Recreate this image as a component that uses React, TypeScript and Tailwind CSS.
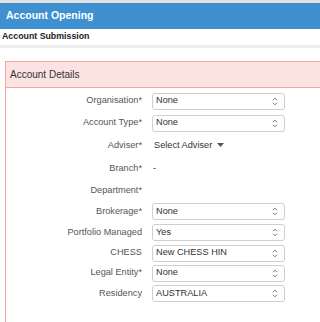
import { ReactNode } from 'react'

type Row = {
  label: string
  h: string
  kind: 'select' | 'adviser' | 'text' | 'empty'
  value?: string
}

const rows: Row[] = [
  { label: 'Organisation*', h: 'h-[22px]', kind: 'select', value: 'None' },
  { label: 'Account Type*', h: 'h-[22px]', kind: 'select', value: 'None' },
  { label: 'Adviser*', h: 'h-[23px]', kind: 'adviser', value: 'Select Adviser' },
  { label: 'Branch*', h: 'h-[23px]', kind: 'text', value: '-' },
  { label: 'Department*', h: 'h-[21px]', kind: 'empty' },
  { label: 'Brokerage*', h: 'h-[21px]', kind: 'select', value: 'None' },
  { label: 'Portfolio Managed', h: 'h-[21px]', kind: 'select', value: 'Yes' },
  { label: 'CHESS', h: 'h-[20px]', kind: 'select', value: 'New CHESS HIN' },
  { label: 'Legal Entity*', h: 'h-[20px]', kind: 'select', value: 'None' },
  { label: 'Residency', h: 'h-[21px]', kind: 'select', value: 'AUSTRALIA' },
]

function UpDown() {
  return (
    <svg width="6" height="9" viewBox="0 0 6 9" className="text-[#666]">
      <path d="M1 3.2 L3 1.2 L5 3.2" fill="none" stroke="currentColor" strokeWidth="0.9" />
      <path d="M1 5.8 L3 7.8 L5 5.8" fill="none" stroke="currentColor" strokeWidth="0.9" />
    </svg>
  )
}

function Select({ value }: { value?: string }) {
  return (
    <div className="w-[133px] h-[17px] border border-[#cfcfcf] rounded-[3px] bg-white flex items-center justify-between pl-[3px] pr-[6px]">
      <span>{value}</span>
      <UpDown />
    </div>
  )
}

function Field({ row }: { row: Row }) {
  let control: ReactNode = null
  if (row.kind === 'select') control = <Select value={row.value} />
  if (row.kind === 'adviser')
    control = (
      <div className="flex items-center gap-[5px] pl-[2px]">
        <span>{row.value}</span>
        <svg width="7" height="4" viewBox="0 0 7 4">
          <path d="M0 0 L7 0 L3.5 4 Z" fill="#555" />
        </svg>
      </div>
    )
  if (row.kind === 'text') control = <span className="pl-[1px]">{row.value}</span>

  return (
    <div className={`${row.h} flex items-center`}>
      <div className="w-[136px] text-right text-[#555]">{row.label}</div>
      <div className="ml-[10px] text-[#333]">{control}</div>
    </div>
  )
}

export default function App() {
  return (
    <div
      className="w-[320px] h-[322px] bg-white overflow-hidden"
      style={{ fontFamily: '"Liberation Sans", Arial, sans-serif' }}
    >
      <div className="h-[3px] bg-[#e2e2e2]" />
      <div className="h-[26px] bg-[#3f90d0] text-white font-bold text-[10.5px] pl-[6px] flex items-center">
        Account Opening
      </div>
      <div className="h-[16px] flex items-center pl-[2px] font-bold text-[8.8px] text-[#222]">
        Account Submission
      </div>
      <div className="h-[3px] bg-[#ececec]" />

      <div className="mt-[13px] ml-[5px] w-[330px] border border-[#f1a5a5]">
        <div className="h-[26px] bg-[#fde2e2] border-b border-[#f1a5a5] flex items-center pl-[4px] text-[10px] text-[#333]">
          Account Details
        </div>
        <div className="pt-[2px] pb-[40px] text-[9.2px]">
          {rows.map((r) => (
            <Field key={r.label} row={r} />
          ))}
        </div>
      </div>
    </div>
  )
}
